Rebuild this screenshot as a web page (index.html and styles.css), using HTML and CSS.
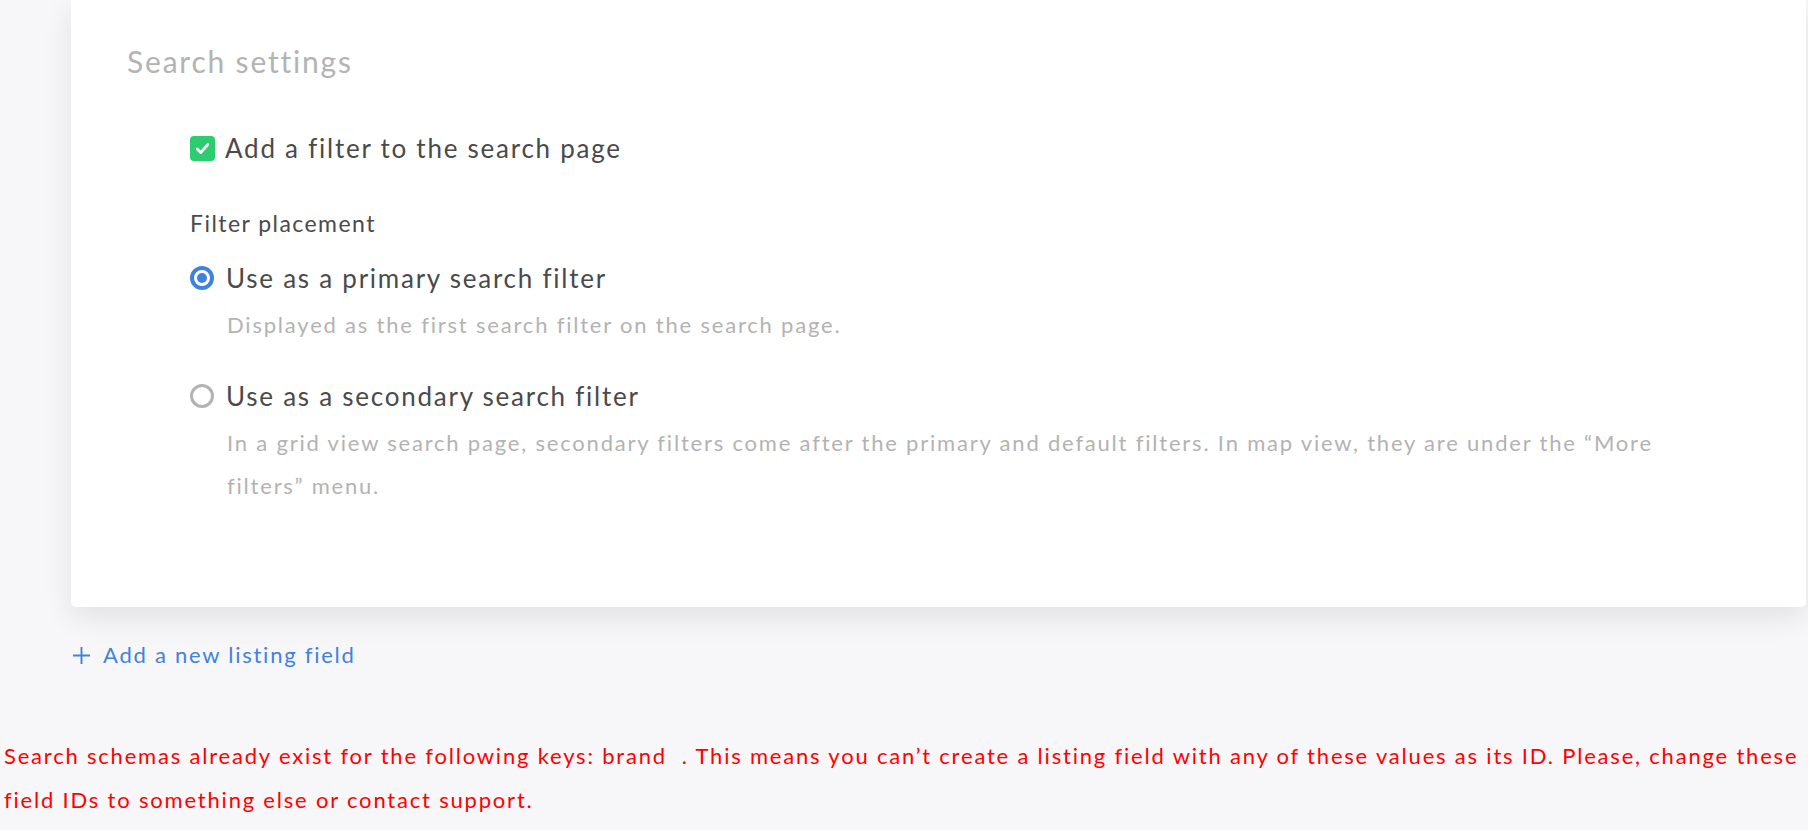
FILE: index.html
```html
<!DOCTYPE html>
<html lang="en">
<head>
<meta charset="utf-8">
<title>Search settings</title>
<link rel="stylesheet" href="styles.css">
</head>
<body>
<main class="page">
  <section class="card">
    <h2 class="section-title">Search settings</h2>
    <div class="options">
      <label class="check-row">
        <span class="checkbox">
          <svg viewBox="0 0 24 24" width="21" height="21"><path d="M6 12.5l4 4.2L18 7.5" fill="none" stroke="#fff" stroke-width="3.2" stroke-linecap="round" stroke-linejoin="round"/></svg>
        </span>
        <span class="check-label">Add a filter to the search page</span>
      </label>

      <div class="group-label">Filter placement</div>

      <div class="radio-option">
        <div class="radio-row">
          <span class="radio radio-on"><span class="radio-dot"></span></span>
          <span class="radio-label">Use as a primary search filter</span>
        </div>
        <p class="radio-desc">Displayed as the first search filter on the search page.</p>
      </div>

      <div class="radio-option radio-option-second">
        <div class="radio-row">
          <span class="radio"></span>
          <span class="radio-label">Use as a secondary search filter</span>
        </div>
        <p class="radio-desc">In a grid view search page, secondary filters come after the primary and default filters. In map view, they are under the “More filters” menu.</p>
      </div>
    </div>
  </section>

  <a class="add-link" href="#">
    <svg class="plus" viewBox="0 0 20 20" width="19" height="19"><path d="M10 1v18M1 10h18" stroke="currentColor" stroke-width="2" fill="none"/></svg>
    <span>Add a new listing field</span>
  </a>
</main>
<p class="error">Search schemas already exist for the following keys: brand&nbsp; . This means you can’t create a listing field with any of these values as its ID. Please, change these field IDs to something else or contact support.</p>
</body>
</html>
```

FILE: styles.css
```css
html, body {
  margin: 0;
  padding: 0;
}
body {
  background: #f7f7f9;
  font-family: Lato, "Open Sans", sans-serif;
  color: #4a4a4a;
  overflow: hidden;
}
.page {
  padding: 0 2px 0 71px;
}
.card {
  background: #fff;
  border-radius: 0 0 5px 5px;
  box-shadow: 0 10px 30px rgba(0, 0, 0, 0.09);
  padding: 43px 100px 100px 56px;
}
.section-title {
  margin: 0;
  font-size: 30px;
  line-height: 36px;
  font-weight: 400;
  letter-spacing: 1.8px;
  color: #b3b3b3;
}
.options {
  padding-left: 63px;
  display: flex;
  flex-direction: column;
}
.check-row {
  margin-top: 53px;
  display: flex;
  align-items: center;
  gap: 10px;
}
.checkbox {
  width: 25px;
  height: 25px;
  border-radius: 4px;
  background: #2ecc71;
  display: flex;
  align-items: center;
  justify-content: center;
  flex: none;
}
.check-label, .radio-label {
  font-size: 26px;
  line-height: 32px;
  letter-spacing: 1.75px;
  color: #4a4a4a;
}
.group-label {
  margin-top: 45px;
  font-size: 23px;
  line-height: 28px;
  letter-spacing: 1.45px;
  color: #4a4a4a;
}
.radio-option {
  margin-top: 25px;
}
.radio-option-second {
  margin-top: 34px;
}
.radio-row {
  display: flex;
  align-items: center;
  gap: 12px;
}
.radio {
  width: 24px;
  height: 24px;
  box-sizing: border-box;
  border-radius: 50%;
  border: 3px solid #b3b3b3;
  display: flex;
  align-items: center;
  justify-content: center;
  flex: none;
}
.radio-on {
  border: 4px solid #3f82de;
}
.radio-dot {
  width: 10px;
  height: 10px;
  border-radius: 50%;
  background: #3f82de;
}
.radio-desc {
  margin: 9px 0 0 37px;
  font-size: 22px;
  line-height: 43px;
  letter-spacing: 1.8px;
  color: #b3b3b3;
}
.add-link {
  margin-top: 34px;
  display: flex;
  align-items: center;
  gap: 12px;
  padding-left: 1px;
  font-size: 22px;
  line-height: 28px;
  letter-spacing: 1.75px;
  color: #3f82de;
  text-decoration: none;
}
.plus {
  flex: none;
}
.error {
  margin: 65px 0 0 0;
  padding: 0 0 0 4px;
  font-size: 22px;
  line-height: 44px;
  letter-spacing: 1.8px;
  color: #ff0000;
}
```
